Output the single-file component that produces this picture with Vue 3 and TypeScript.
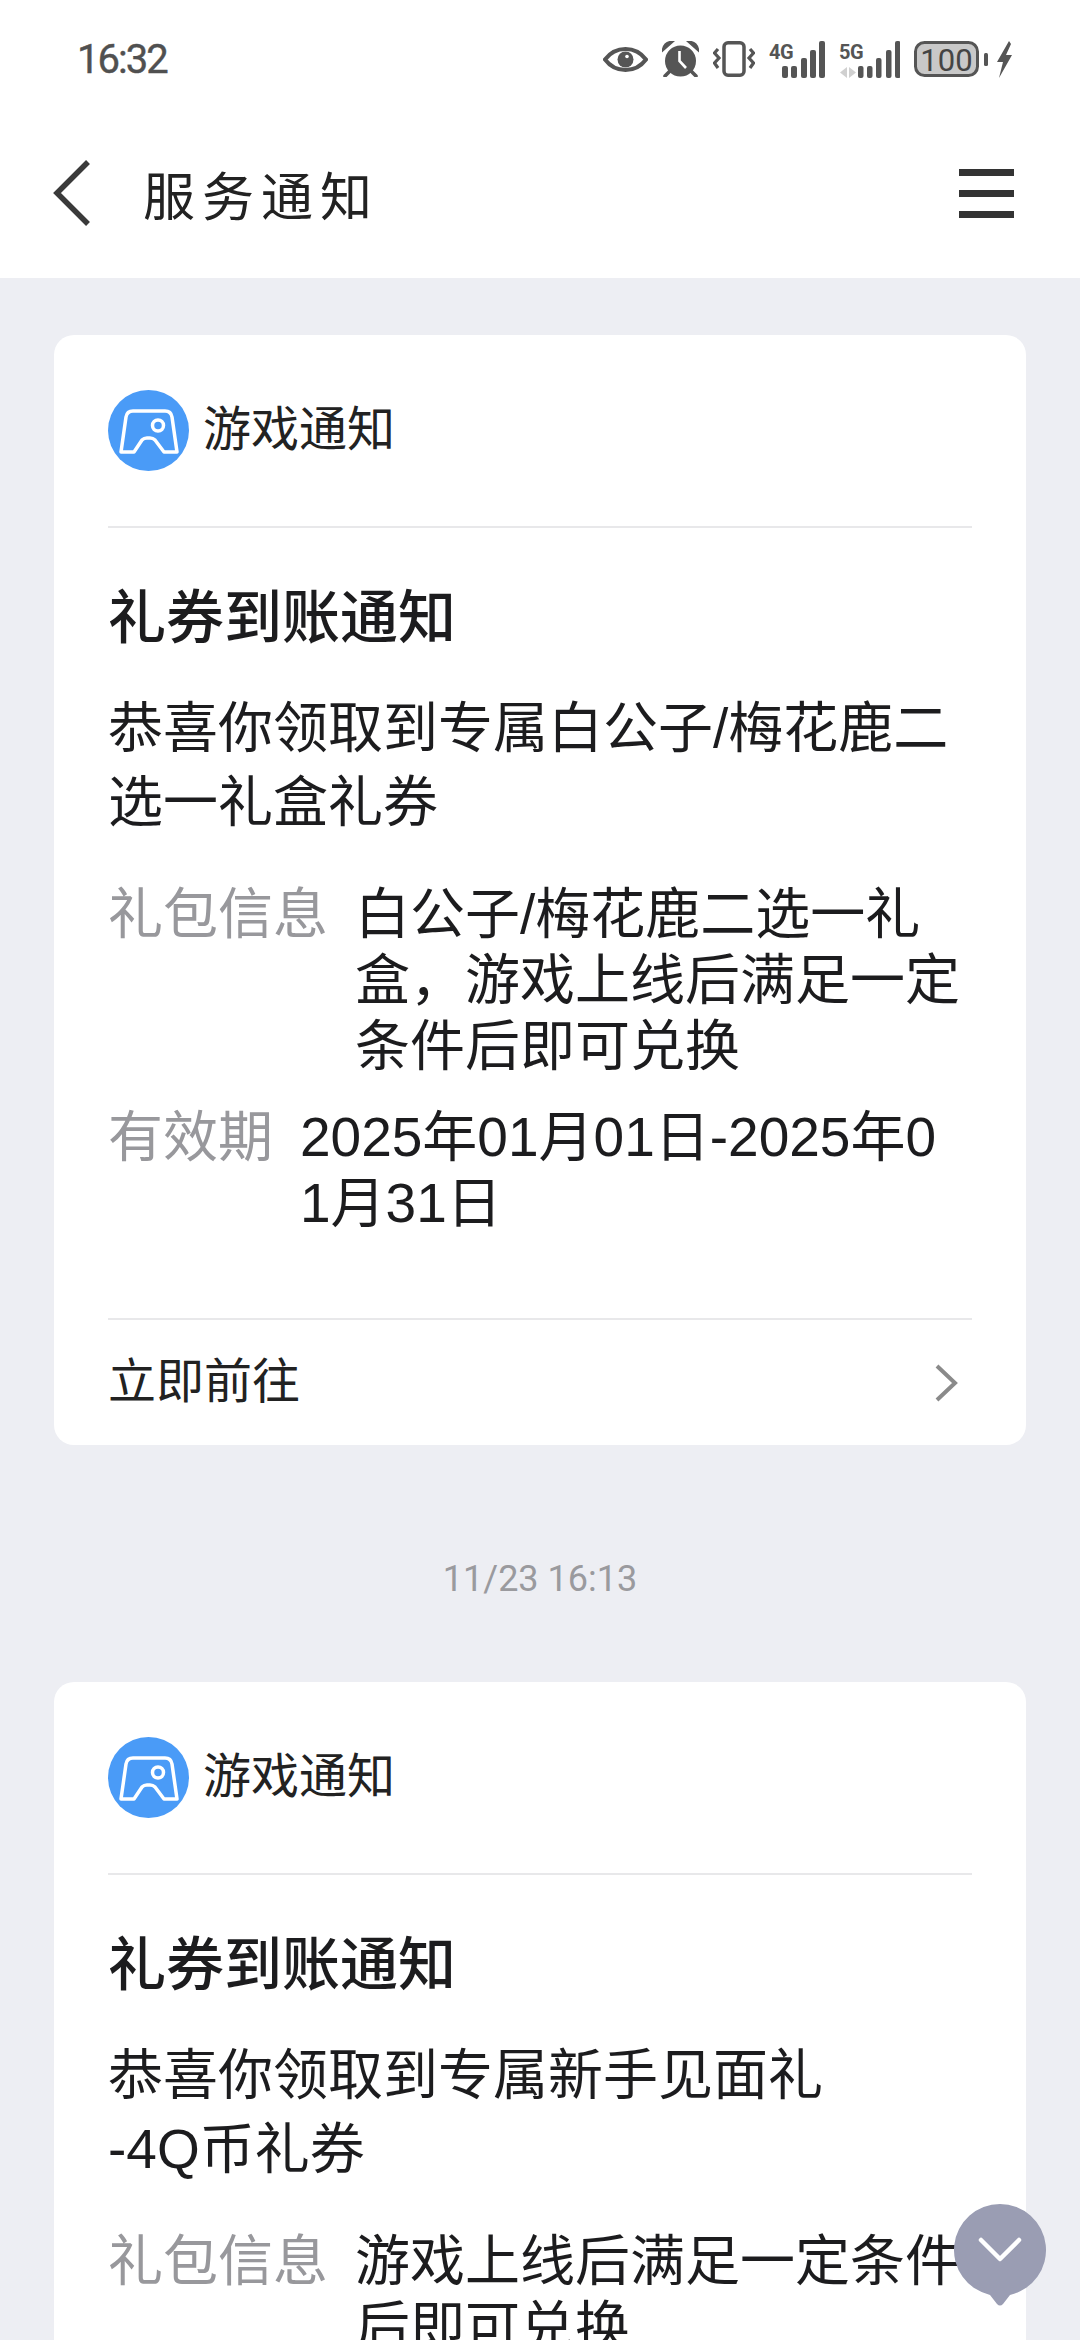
<script setup lang="ts">
interface Row {
  label: string
  value: string
}

interface Notice {
  body: string
  rows: Row[]
  time?: string
}

const notices: Notice[] = [
  {
    body: '恭喜你领取到专属白公子/梅花鹿二选一礼盒礼券',
    rows: [
      { label: '礼包信息', value: '白公子/梅花鹿二选一礼盒，游戏上线后满足一定条件后即可兑换' },
      { label: '有效期', value: '2025年01月01日-2025年01月31日' },
    ],
    time: '11/23 16:13',
  },
  {
    body: '恭喜你领取到专属新手见面礼\n-4Q币礼券',
    rows: [
      { label: '礼包信息', value: '游戏上线后满足一定条件后即可兑换' },
      { label: '有效期', value: '2025年01月01日-2025年01月31日' },
    ],
  },
]

const bars4g = [
  { x: 13, h: 12 },
  { x: 22, h: 12 },
  { x: 32, h: 20 },
  { x: 41, h: 28 },
  { x: 50, h: 37 },
]
const bars5g = [
  { x: 19, h: 12 },
  { x: 28, h: 12 },
  { x: 37, h: 20 },
  { x: 47, h: 28 },
  { x: 56, h: 37 },
]
</script>

<template>
  <div class="page">
    <header class="top">
      <div class="status">
        <span class="clock">16:32</span>
        <div class="status-icons">
          <svg width="45" height="25" viewBox="0 0 45 25">
            <path d="M2 12.500C8 4.500 15 2 22.500 2S37 4.500 43 12.500C37 20.500 30 23 22.500 23S8 20.500 2 12.500Z" fill="none" stroke="#555" stroke-width="4" />
            <circle cx="22.500" cy="12.500" r="8" fill="#555" />
            <circle cx="24" cy="9.500" r="1.800" fill="#fff" />
          </svg>
          <svg width="37" height="36" viewBox="0 0 37 36">
            <circle cx="18.500" cy="20" r="15.500" fill="#555" />
            <path d="M17.500 10V20L24 27" fill="none" stroke="#fff" stroke-width="2.600" />
            <path d="M1 9C2 4 5 1 10 1L1 9ZM36 9C35 4 32 1 27 1L36 9Z" fill="#555" stroke="#555" stroke-width="2.500" />
            <path d="M8 30L3 35M29 30L34 35" stroke="#555" stroke-width="3.600" stroke-linecap="round" />
          </svg>
          <svg width="42" height="36" viewBox="0 0 42 36">
            <rect x="11" y="1.750" width="20" height="32.500" rx="4" fill="none" stroke="#555" stroke-width="3.500" />
            <path d="M5 8L1.500 12L6 17L1.500 22L5 27M37 8L40.500 12L36 17L40.500 22L37 27" fill="none" stroke="#555" stroke-width="3.200" />
          </svg>
          <svg width="56" height="37" viewBox="0 0 56 37">
            <text x="0" y="18" class="net">4G</text>
            <rect v-for="b in bars4g" :key="b.x" :x="b.x" :y="37 - b.h" width="6" :height="b.h" rx="2" fill="#555" />
          </svg>
          <svg width="61" height="37" viewBox="0 0 61 37">
            <text x="0" y="18" class="net">5G</text>
            <path d="M8 26V37L1 31.500ZM10 26V37L17 31.500Z" fill="#d0d0d0" />
            <rect v-for="b in bars5g" :key="b.x" :x="b.x" :y="37 - b.h" width="5.500" :height="b.h" rx="2" fill="#555" />
          </svg>
          <svg width="74" height="36" viewBox="0 0 74 36">
            <rect x="1.500" y="1.500" width="62" height="33" rx="9" fill="#c8c8c8" stroke="#555" stroke-width="3" />
            <text x="32.500" y="29.500" text-anchor="middle" class="level">100</text>
            <rect x="70" y="12" width="4" height="13" rx="1.500" fill="#555" />
          </svg>
          <svg class="bolt" width="15" height="37" viewBox="0 0 15 37">
            <path d="M12 0L0 21H6L2 37L15 14H9L14 3Z" fill="#555" />
          </svg>
        </div>
      </div>
      <nav class="nav">
        <svg class="back" width="38" height="66" viewBox="0 0 38 66">
          <path d="M35 2L4 33L35 64" fill="none" stroke="#3a3a3a" stroke-width="5.500" />
        </svg>
        <h1 class="nav-title">服务通知</h1>
        <div class="menu">
          <i></i>
          <i></i>
          <i></i>
        </div>
      </nav>
    </header>

    <main class="list">
      <template v-for="(n, i) in notices" :key="i">
        <section class="card">
          <div class="card-head">
            <svg width="81" height="81" viewBox="0 0 81 81">
              <circle cx="40.500" cy="40.500" r="40.500" fill="#4a9bf7" />
              <path d="M13 62L18 27Q19 21 25 21H57Q63 21 64 27L69 62H56L47 50Q45 48 42 48H39Q36 48 34 50L26 62Z" fill="none" stroke="#fff" stroke-width="3.500" stroke-linejoin="round" />
              <circle cx="50" cy="35.500" r="5.500" fill="none" stroke="#fff" stroke-width="3.500" />
            </svg>
            <span class="app-name">游戏通知</span>
          </div>
          <div class="card-body">
            <h2 class="title">礼券到账通知</h2>
            <p class="desc">{{ n.body }}</p>
            <div class="rows">
              <div v-for="r in n.rows" :key="r.label" class="row">
                <span class="label">{{ r.label }}</span>
                <span class="value">{{ r.value }}</span>
              </div>
            </div>
          </div>
          <div class="card-link">
            <span>立即前往</span>
            <svg width="24" height="38" viewBox="0 0 24 38">
              <path d="M3 2L21 19L3 36" fill="none" stroke="#8a8a8a" stroke-width="4" />
            </svg>
          </div>
        </section>
        <div v-if="n.time" class="stamp">{{ n.time }}</div>
      </template>
    </main>

    <button class="fab" type="button">
      <svg width="92" height="102" viewBox="0 0 92 102">
        <path d="M46 0A46 46 0 0 1 56 90.900L49 100Q46 103 43 100L36 90.900A46 46 0 0 1 46 0Z" fill="#9a9db3" />
        <path d="M27 36L46 55L65 36" fill="none" stroke="#fff" stroke-width="4.500" stroke-linecap="round" stroke-linejoin="round" />
      </svg>
    </button>
  </div>
</template>

<style>
html,
body {
  margin: 0;
  background: #edeef3;
}
</style>

<style scoped>
.page {
  position: relative;
  width: 1080px;
  height: 2340px;
  overflow: hidden;
  background: #edeef3;
  font-family: "Liberation Sans", "Noto Sans CJK SC", sans-serif;
  color: #1c1c1e;
}

.top {
  background: #fff;
  height: 278px;
}

.status {
  display: flex;
  align-items: center;
  justify-content: space-between;
  height: 118px;
  padding: 0 68px 0 77px;
}

.clock {
  font-family: Roboto, sans-serif;
  font-size: 40px;
  letter-spacing: -2px;
  color: #505050;
  -webkit-text-stroke: 0.4px #505050;
}

.status-icons {
  display: flex;
  align-items: center;
  gap: 14px;
}

.bolt {
  margin-left: -5px;
}

.net {
  font-family: Roboto, sans-serif;
  font-size: 20px;
  font-weight: 700;
  letter-spacing: -0.5px;
  fill: #555;
}

.level {
  font-family: Roboto, sans-serif;
  font-size: 31px;
  fill: #444;
}

.nav {
  display: flex;
  align-items: center;
  height: 150px;
  padding: 0 66px 10px 53px;
}

.nav-title {
  margin: 0 0 0 52px;
  flex: 1;
  font-family: "Noto Sans CJK SC", sans-serif;
  font-size: 52px;
  letter-spacing: 7px;
  font-weight: 400;
  color: #222;
}

.menu {
  display: flex;
  flex-direction: column;
  gap: 14px;
  width: 55px;
}

.menu i {
  display: block;
  height: 7px;
  background: #333;
}

.list {
  display: flex;
  flex-direction: column;
  padding: 57px 54px 0;
}

.card {
  flex-shrink: 0;
  background: #fff;
  border-radius: 20px;
  padding: 0 54px;
}

.card-head {
  display: flex;
  align-items: center;
  gap: 14px;
  padding: 55px 0;
  border-bottom: 2px solid #e8e8ea;
}

.app-name {
  margin-bottom: 2px;
  font-size: 48px;
  line-height: 60px;
  color: #222;
}

.card-body {
  padding: 50px 0 82px;
}

.title {
  margin: 0 0 33px;
  font-size: 58px;
  font-weight: 500;
  line-height: 80px;
}

.desc {
  margin: 0 0 42px;
  font-size: 55px;
  line-height: 74px;
  word-break: break-all;
  white-space: pre-line;
}

.rows {
  display: flex;
  flex-direction: column;
  gap: 25px;
}

.row {
  display: flex;
  gap: 27px;
  font-size: 55px;
  line-height: 66px;
}

.label {
  flex-shrink: 0;
  color: #98989c;
}

.value {
  padding-right: 9px;
  word-break: break-all;
}

.card-link {
  display: flex;
  align-items: center;
  justify-content: space-between;
  height: 125px;
  border-top: 2px solid #e8e8ea;
  font-size: 48px;
  padding-right: 14px;
  color: #222;
}

.card-link span {
  margin-bottom: 12px;
}

.stamp {
  flex-shrink: 0;
  box-sizing: border-box;
  height: 237px;
  padding-top: 31px;
  display: flex;
  align-items: center;
  justify-content: center;
  font-family: Roboto, sans-serif;
  font-size: 36px;
  white-space: pre;
  color: #9a9a9e;
}

.fab {
  position: absolute;
  left: 954px;
  top: 2204px;
  padding: 0;
  border: 0;
  background: none;
  line-height: 0;
}
</style>
